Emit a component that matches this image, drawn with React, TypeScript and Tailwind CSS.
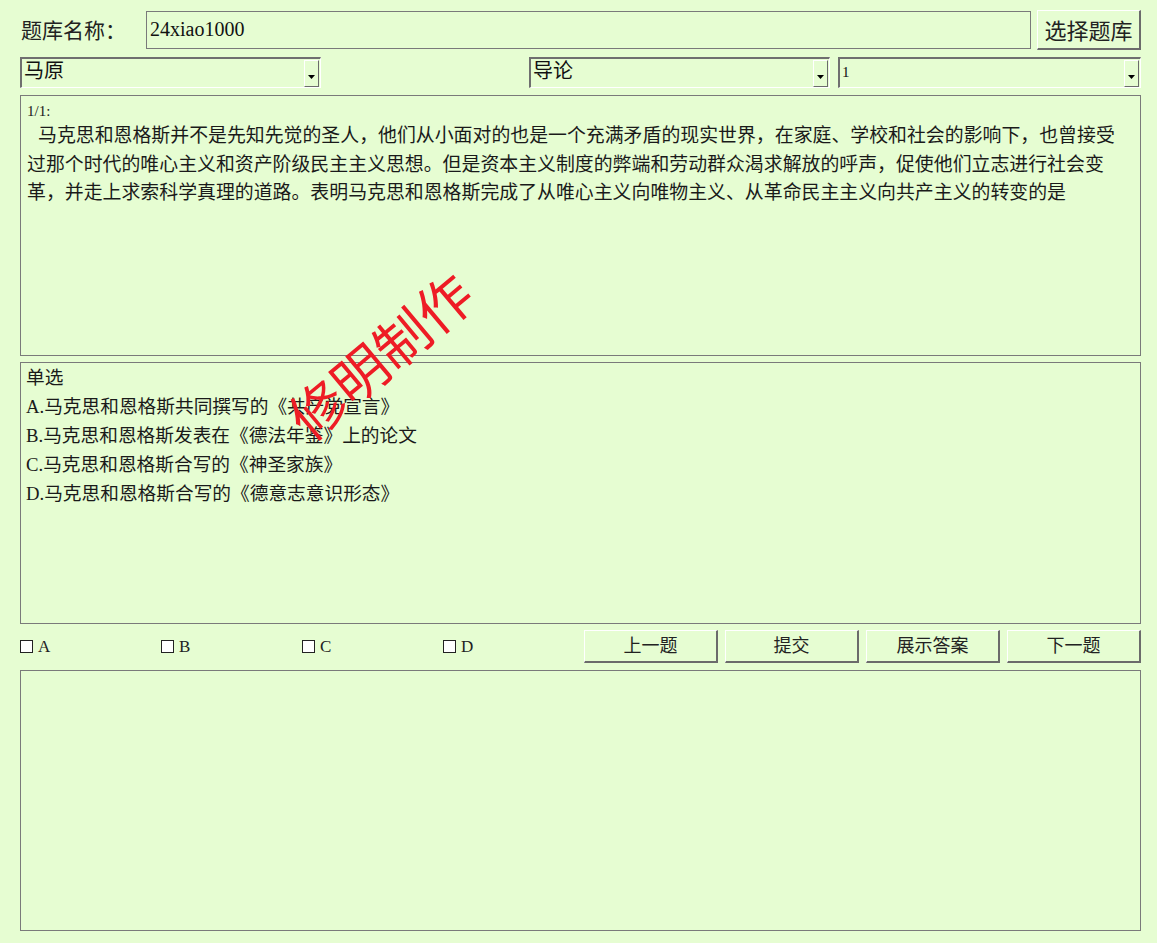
const serif = "font-['Liberation_Serif','Noto_Sans_CJK_SC',serif]";

const question =
  '马克思和恩格斯并不是先知先觉的圣人，他们从小面对的也是一个充满矛盾的现实世界，在家庭、学校和社会的影响下，也曾接受过那个时代的唯心主义和资产阶级民主主义思想。但是资本主义制度的弊端和劳动群众渴求解放的呼声，促使他们立志进行社会变革，并走上求索科学真理的道路。表明马克思和恩格斯完成了从唯心主义向唯物主义、从革命民主主义向共产主义的转变的是';

const options = [
  'A.马克思和恩格斯共同撰写的《共产党宣言》',
  'B.马克思和恩格斯发表在《德法年鉴》上的论文',
  'C.马克思和恩格斯合写的《神圣家族》',
  'D.马克思和恩格斯合写的《德意志意识形态》',
];

function Select({ value, className, serifText }: { value: string; className: string; serifText?: boolean }) {
  return (
    <div
      className={`flex h-[31px] border-t-2 border-l-2 border-t-[#6f6f6f] border-l-[#6f6f6f] border-b border-r border-b-white border-r-white ${className}`}
    >
      <div
        className={`flex-1 pl-[2px] leading-[22px] text-[#111] ${
          serifText ? `${serif} text-[15px] pt-[2px]` : "font-['Noto_Sans_CJK_SC',sans-serif] text-[20px]"
        }`}
      >
        {value}
      </div>
      <div className="w-[15px] h-[27px] my-[1px] mr-[1px] flex items-center justify-center border-l border-t border-l-white border-t-white border-r border-b border-r-[#6b6b6b] border-b-[#6b6b6b]">
        <svg width="7" height="4" viewBox="0 0 7 4" className="mt-[6px]">
          <path d="M0 0h7L3.5 4z" fill="#000" />
        </svg>
      </div>
    </div>
  );
}

function Button({ label, className }: { label: string; className: string }) {
  return (
    <button
      className={`flex items-center justify-center border-t border-l border-t-white border-l-white border-b-2 border-r-2 border-b-[#6b6b6b] border-r-[#6b6b6b] bg-[#e6fdd2] text-[#222] ${className}`}
    >
      {label}
    </button>
  );
}

export default function App() {
  return (
    <div className={`relative w-[1157px] h-[943px] overflow-hidden bg-[#e6fdd2] pl-[20px] pr-[16px] pt-[10px] ${serif}`}>
      {/* file row */}
      <div className="flex items-center h-[40px]">
        <div className="w-[126px] pl-[1px] text-[21px] text-[#222] font-['Noto_Sans_CJK_SC',sans-serif]">题库名称：</div>
        <div className="flex-1 h-[38px] border border-[#7a7a7a] flex items-center pl-[3px] pb-[2px] text-[20px] text-[#111]">
          24xiao1000
        </div>
        <Button label="选择题库" className="ml-[6px] w-[104px] h-[40px] text-[22px] font-['Noto_Sans_CJK_SC',sans-serif]" />
      </div>

      {/* selects */}
      <div className="flex mt-[7px]">
        <Select value="马原" className="w-[301px]" />
        <Select value="导论" className="w-[301px] ml-[208px]" />
        <Select value="1" className="flex-1 ml-[8px]" serifText />
      </div>

      {/* question */}
      <div className="mt-[7px] h-[261px] border border-[#7a7a7a] pl-[6px] pr-[10px] pt-[6px] text-[#1a1a1a]">
        <div className="text-[15px] leading-[18px]">1/1:</div>
        <p className="mt-[2px] text-[18.9px] leading-[28.5px] indent-[11px]">{question}</p>
      </div>

      {/* options */}
      <div className="mt-[6px] h-[262px] border border-[#7a7a7a] pl-[5px] text-[18.7px] leading-[29px] text-[#1a1a1a]">
        <div>单选</div>
        {options.map(o => (
          <div key={o}>{o}</div>
        ))}
      </div>

      {/* answer row */}
      <div className="flex mt-[6px] h-[33px]">
        {['A', 'B', 'C', 'D'].map(l => (
          <label key={l} className="w-[141px] flex items-center gap-[5px] text-[17px] text-[#222]">
            <span className="w-[13px] h-[13px] border border-[#222] bg-white" />
            {l}
          </label>
        ))}
        <div className="flex-1 flex gap-[7px]">
          {['上一题', '提交', '展示答案', '下一题'].map(b => (
            <Button key={b} label={b} className="flex-1 h-[33px] text-[18px]" />
          ))}
        </div>
      </div>

      {/* answer box */}
      <div className="mt-[7px] h-[261px] border border-[#7a7a7a]" />

      {/* watermark */}
      <div className="absolute left-[264px] top-[324px] w-[230px] text-center -rotate-[40deg] text-[55px] leading-[60px] text-[#ee1c25] font-['Noto_Sans_CJK_SC',sans-serif] pointer-events-none">
        修明制作
      </div>
    </div>
  );
}
